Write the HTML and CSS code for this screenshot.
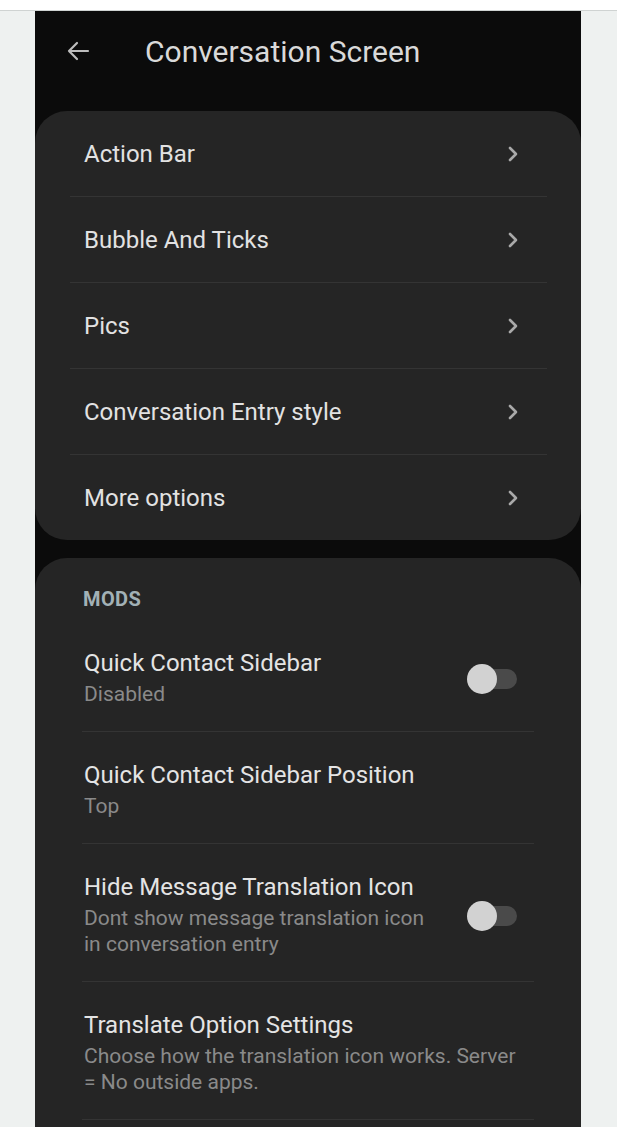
FILE: index.html
```html
<!DOCTYPE html>
<html>
<head>
<meta charset="utf-8">
<link rel="stylesheet" href="styles.css">
</head>
<body>
<div class="topstrip"></div>
<div class="stage">
  <div class="phone">
    <header class="appbar">
      <svg class="back" width="24" height="20" viewBox="0 0 24 20"><path d="M22 10H3M11 2L3 10l8 8" fill="none" stroke="#bdbdbd" stroke-width="2.2" stroke-linecap="round" stroke-linejoin="round"/></svg>
      <h1 class="title">Conversation Screen</h1>
    </header>

    <section class="card nav-card">
      <div class="nav-row"><span>Action Bar</span><svg class="chev" width="12" height="18" viewBox="0 0 12 18"><path d="M3 3l6 6-6 6" fill="none" stroke="#a9a9a9" stroke-width="2.6" stroke-linecap="round" stroke-linejoin="round"/></svg></div>
      <div class="nav-row"><span>Bubble And Ticks</span><svg class="chev" width="12" height="18" viewBox="0 0 12 18"><path d="M3 3l6 6-6 6" fill="none" stroke="#a9a9a9" stroke-width="2.6" stroke-linecap="round" stroke-linejoin="round"/></svg></div>
      <div class="nav-row"><span>Pics</span><svg class="chev" width="12" height="18" viewBox="0 0 12 18"><path d="M3 3l6 6-6 6" fill="none" stroke="#a9a9a9" stroke-width="2.6" stroke-linecap="round" stroke-linejoin="round"/></svg></div>
      <div class="nav-row"><span>Conversation Entry style</span><svg class="chev" width="12" height="18" viewBox="0 0 12 18"><path d="M3 3l6 6-6 6" fill="none" stroke="#a9a9a9" stroke-width="2.6" stroke-linecap="round" stroke-linejoin="round"/></svg></div>
      <div class="nav-row last"><span>More options</span><svg class="chev" width="12" height="18" viewBox="0 0 12 18"><path d="M3 3l6 6-6 6" fill="none" stroke="#a9a9a9" stroke-width="2.6" stroke-linecap="round" stroke-linejoin="round"/></svg></div>
    </section>

    <section class="card mods-card">
      <div class="section-label">MODS</div>
      <div class="pref-row">
        <div class="pref-text">
          <div class="pref-title">Quick Contact Sidebar</div>
          <div class="pref-sub">Disabled</div>
        </div>
        <div class="switch"><div class="track"></div><div class="thumb"></div></div>
      </div>
      <div class="pref-row">
        <div class="pref-text">
          <div class="pref-title">Quick Contact Sidebar Position</div>
          <div class="pref-sub">Top</div>
        </div>
      </div>
      <div class="pref-row">
        <div class="pref-text narrow">
          <div class="pref-title">Hide Message Translation Icon</div>
          <div class="pref-sub">Dont show message translation icon in conversation entry</div>
        </div>
        <div class="switch"><div class="track"></div><div class="thumb"></div></div>
      </div>
      <div class="pref-row">
        <div class="pref-text wide">
          <div class="pref-title">Translate Option Settings</div>
          <div class="pref-sub">Choose how the translation icon works. Server = No outside apps.</div>
        </div>
      </div>
    </section>
  </div>
</div>
</body>
</html>
```

FILE: styles.css
```css
* { box-sizing: border-box; }
html, body { margin: 0; padding: 0; }
body {
  background: #eef1f0;
  font-family: Roboto, "Noto Sans", "Liberation Sans", sans-serif;
  height: 1127px;
  overflow: hidden;
  display: flex;
  flex-direction: column;
}
.topstrip {
  height: 11px;
  background: #ffffff;
  border-bottom: 1px solid #cfd3d2;
  flex: none;
}
.stage {
  flex: 1;
  display: flex;
  padding-left: 35px;
}
.phone {
  width: 546px;
  background: #0b0b0b;
  display: flex;
  flex-direction: column;
}
.appbar {
  height: 100px;
  display: flex;
  align-items: center;
  padding-left: 31px;
  padding-bottom: 20px;
  flex: none;
}
.back { flex: none; }
.title {
  margin: 0 0 0 55px;
  font-size: 30px;
  font-weight: 400;
  color: #d9d9d9;
}
.card {
  background: #252525;
  border-radius: 32px;
}
.nav-card {
  display: flex;
  flex-direction: column;
  padding: 0 34px 0 35px;
}
.nav-row {
  height: 86px;
  border-bottom: 1px solid #343434;
  display: flex;
  align-items: center;
  justify-content: space-between;
  padding: 0 28px 0 14px;
  font-size: 24px;
  color: #e2e2e2;
}
.nav-row.last { border-bottom: none; height: 85px; }
.chev { flex: none; }
.mods-card {
  margin-top: 18px;
  flex: 1;
  padding: 0 47px;
  border-bottom-left-radius: 0;
  border-bottom-right-radius: 0;
}
.section-label {
  height: 62px;
  padding: 29px 0 0 1px;
  font-size: 20px;
  line-height: 24px;
  font-weight: 700;
  color: #a2b1b6;
  letter-spacing: 0.4px;
}
.pref-row {
  display: flex;
  align-items: center;
  border-bottom: 1px solid #343434;
  padding: 30px 0 24px 2px;
}
.pref-text { flex: 1; min-width: 0; }
.pref-text.narrow { flex: none; width: 355px; }
.pref-text.wide { flex: none; width: 445px; }
.pref-title {
  font-size: 24px;
  line-height: 26px;
  color: #e4e4e4;
}
.pref-sub {
  margin-top: 5px;
  font-size: 21px;
  line-height: 26px;
  color: #8a8a8a;
}
.switch {
  position: relative;
  width: 50px;
  height: 30px;
  margin-left: auto;
  margin-right: 17px;
  flex: none;
}
.track {
  position: absolute;
  left: 8px;
  right: 0;
  top: 5px;
  height: 20px;
  border-radius: 10px;
  background: #4a4a4a;
}
.thumb {
  position: absolute;
  left: 0;
  top: 0;
  width: 30px;
  height: 30px;
  border-radius: 50%;
  background: #d2d2d2;
}
```
